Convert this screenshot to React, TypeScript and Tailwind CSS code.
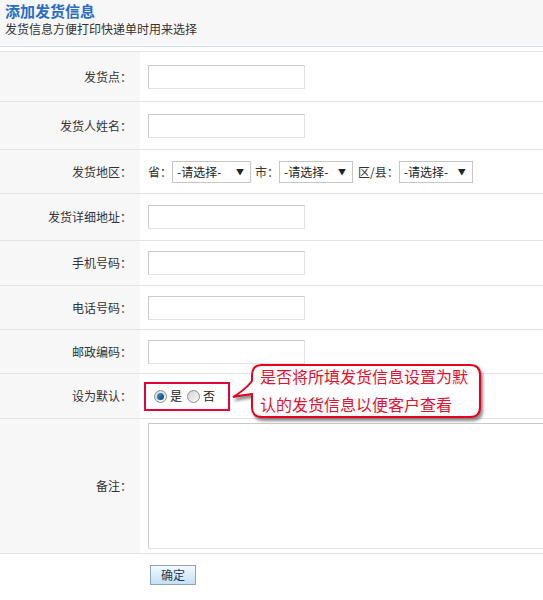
import React from "react";

const font = { fontFamily: '"Noto Sans CJK SC", "Noto Sans", sans-serif' };

function TextInput() {
  return <div className="h-[24px] w-[157px] border border-[#c9c9c9] border-b-[#e2e2e2] border-r-[#e2e2e2] bg-white" />;
}

function FakeSelect({ w }: { w: string }) {
  return (
    <div className={`flex h-[22px] ${w} items-center justify-between border border-[#c6c6c6] bg-white pl-[4px] pr-[6px] text-[12px] text-[#222]`}>
      <span>-请选择-</span>
      <span className="text-[8px] leading-none">▼</span>
    </div>
  );
}

function Radio({ checked }: { checked?: boolean }) {
  return (
    <span className="flex h-[13px] w-[13px] items-center justify-center rounded-full border border-[#8c8c8c] bg-gradient-to-br from-[#d4d4d4] to-[#f8f8f8]">
      {checked && <span className="h-[7px] w-[7px] rounded-full bg-gradient-to-br from-[#3a9bd8] to-[#0c3f6e]" />}
    </span>
  );
}

function Row({ label, h, children }: { label: string; h: string; children: React.ReactNode }) {
  return (
    <div className={`flex ${h} border-b border-[#e3e3e3]`}>
      <div className="flex w-[140px] shrink-0 items-center justify-end bg-[#f7f7f7] pr-[8px] text-[12px] text-[#333]">
        {label}
      </div>
      <div className="flex flex-1 items-center pl-[8px]">{children}</div>
    </div>
  );
}

export default function App() {
  return (
    <div className="relative h-[600px] w-[543px] overflow-hidden bg-white" style={font}>
      {/* page heading */}
      <div className="h-[47px] border-b border-[#d5dde6] bg-[#f7f7f7] pl-[5px] pt-[1px]">
        <div className="text-[15px] font-bold leading-[20px] text-[#2b6cc4]">添加发货信息</div>
        <div className="text-[12px] leading-[16px] text-[#333]">发货信息方便打印快递单时用来选择</div>
      </div>

      <div className="mt-[4px] border-t border-[#e3e3e3]">
        <Row label="发货点：" h="h-[50px]">
          <TextInput />
        </Row>
        <Row label="发货人姓名：" h="h-[48px]">
          <TextInput />
        </Row>
        <Row label="发货地区：" h="h-[44px]">
          <div className="flex items-center text-[12px] text-[#333]">
            <span>省：</span>
            <FakeSelect w="w-[79px]" />
            <span className="ml-[4px]">市：</span>
            <FakeSelect w="w-[74px]" />
            <span className="ml-[5px]">区/县：</span>
            <FakeSelect w="w-[74px]" />
          </div>
        </Row>
        <Row label="发货详细地址：" h="h-[47px]">
          <TextInput />
        </Row>
        <Row label="手机号码：" h="h-[45px]">
          <TextInput />
        </Row>
        <Row label="电话号码：" h="h-[44px]">
          <TextInput />
        </Row>
        <Row label="邮政编码：" h="h-[44px]">
          <TextInput />
        </Row>
        <Row label="设为默认：" h="h-[45px]">
          <div className="-ml-[4px] flex h-[29px] w-[86px] items-center border-2 border-[#e6003c] pl-[8px] text-[12px] text-[#222]">
            <Radio checked />
            <span className="ml-[3px]">是</span>
            <span className="ml-[5px]">
              <Radio />
            </span>
            <span className="ml-[3px]">否</span>
          </div>
        </Row>
        <Row label="备注：" h="h-[135px]">
          <div className="h-[126px] w-[420px] border border-[#c9c9c9] border-b-[#e2e2e2] bg-white" />
        </Row>
      </div>

      <div className="flex pl-[150px] pt-[11px]">
        <button className="h-[20px] w-[46px] border border-[#8fa3b3] bg-gradient-to-b from-[#f4f9fd] to-[#c4e0f5] text-[12px] leading-none text-[#1c3b5c]">
          确定
        </button>
      </div>

      {/* hint bubble beside the default switch */}
      <div className="absolute left-[231px] top-[363px] h-[58px] w-[252px]">
        <svg width="252" height="58" className="absolute inset-0 drop-shadow-[2px_3px_1.5px_rgba(0,0,0,0.45)]">
          <path
            d="M31 2 H239 Q249 2 249 12 V44 Q249 54 239 54 H31 Q21 54 21 44 V31 Q12 32 2 34 Q14 27 21 18 V12 Q21 2 31 2 Z"
            fill="#fff"
            stroke="#e8001c"
            strokeWidth="2"
          />
        </svg>
        <div className="absolute left-[29px] top-[-1px] text-[16px] leading-[28px] text-[#e8112d]">
          <div>是否将所填发货信息设置为默</div>
          <div>认的发货信息以便客户查看</div>
        </div>
      </div>
    </div>
  );
}
